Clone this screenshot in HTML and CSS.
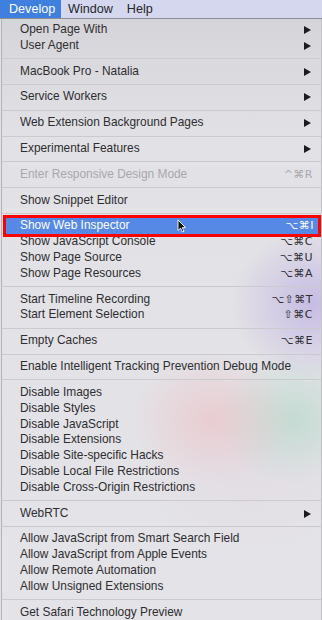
FILE: index.html
```html
<!DOCTYPE html>
<html lang="en">
<head>
    <meta charset="UTF-8">
    <meta name="viewport" content="width=device-width, initial-scale=1.0">
    <title>Develop menu</title>
    <link rel="stylesheet" href="styles.css">
</head>
<body>
    <div class="menubar">
        <div class="title active">Develop</div>
        <div class="title">Window</div>
        <div class="title">Help</div>
    </div>
    <div class="menu">
        <div class="item"><span>Open Page With</span><i class="arrow"></i></div>
        <div class="item"><span>User Agent</span><i class="arrow"></i></div>
        <div class="sep"></div>
        <div class="item"><span>MacBook Pro - Natalia</span><i class="arrow"></i></div>
        <div class="sep"></div>
        <div class="item"><span>Service Workers</span><i class="arrow"></i></div>
        <div class="sep"></div>
        <div class="item"><span>Web Extension Background Pages</span><i class="arrow"></i></div>
        <div class="sep"></div>
        <div class="item"><span>Experimental Features</span><i class="arrow"></i></div>
        <div class="sep"></div>
        <div class="item disabled"><span>Enter Responsive Design Mode</span><span class="key">^⌘R</span></div>
        <div class="sep"></div>
        <div class="item"><span>Show Snippet Editor</span></div>
        <div class="sep"></div>
        <div class="item selected">
            <span>Show Web Inspector</span><span class="key">⌥⌘I</span>
            <svg class="cursor" width="10" height="14" viewBox="0 0 10 14">
                <path d="M1 1 L1 11.5 L3.6 9.2 L5.4 13 L7 12.3 L5.3 8.6 L8.6 8.6 Z" fill="#111" stroke="#fff" stroke-width="0.9"/>
            </svg>
        </div>
        <div class="item"><span>Show JavaScript Console</span><span class="key">⌥⌘C</span></div>
        <div class="item"><span>Show Page Source</span><span class="key">⌥⌘U</span></div>
        <div class="item"><span>Show Page Resources</span><span class="key">⌥⌘A</span></div>
        <div class="sep"></div>
        <div class="item"><span>Start Timeline Recording</span><span class="key">⌥⇧⌘T</span></div>
        <div class="item"><span>Start Element Selection</span><span class="key">⇧⌘C</span></div>
        <div class="sep"></div>
        <div class="item"><span>Empty Caches</span><span class="key">⌥⌘E</span></div>
        <div class="sep"></div>
        <div class="item"><span>Enable Intelligent Tracking Prevention Debug Mode</span></div>
        <div class="sep"></div>
        <div class="item"><span>Disable Images</span></div>
        <div class="item"><span>Disable Styles</span></div>
        <div class="item"><span>Disable JavaScript</span></div>
        <div class="item"><span>Disable Extensions</span></div>
        <div class="item"><span>Disable Site-specific Hacks</span></div>
        <div class="item"><span>Disable Local File Restrictions</span></div>
        <div class="item"><span>Disable Cross-Origin Restrictions</span></div>
        <div class="sep"></div>
        <div class="item"><span>WebRTC</span><i class="arrow"></i></div>
        <div class="sep"></div>
        <div class="item"><span>Allow JavaScript from Smart Search Field</span></div>
        <div class="item"><span>Allow JavaScript from Apple Events</span></div>
        <div class="item"><span>Allow Remote Automation</span></div>
        <div class="item"><span>Allow Unsigned Extensions</span></div>
        <div class="sep"></div>
        <div class="item"><span>Get Safari Technology Preview</span></div>
    </div>
</body>
</html>
```

FILE: styles.css
```css
*{
    box-sizing: border-box;
}
body{
    margin: 0;
    width: 322px;
    height: 620px;
    overflow: hidden;
    background-color: #e2e1e5;
    font-family: "Liberation Sans", "DejaVu Sans", sans-serif;
    color: #2e2e31;
}
.menubar{
    height: 19px;
    display: flex;
    background-color: #d4d7ee;
    border-bottom: 1px solid #8e8e94;
    font-size: 12.6px;
    line-height: 18px;
}
.title{
    padding: 0 7px 0 7px;
    color: #262629;
}
.title.active{
    background-color: #3f7fe0;
    color: #fff;
    width: 61px;
    padding-left: 9px;
}
.menu{
    height: 601px;
    padding-top: 3px;
    margin-left: 1px;
    border-left: 1px solid #b4b3b8;
    border-right: 1px solid #c2c1c6;
    font-size: 11.9px;
    background:
        radial-gradient(ellipse 80px 75px at 310px 285px, rgba(170, 150, 225, 0.5), rgba(170, 150, 225, 0)),
        radial-gradient(ellipse 80px 65px at 210px 400px, rgba(238, 188, 192, 0.55), rgba(238, 188, 192, 0)),
        radial-gradient(ellipse 75px 65px at 290px 400px, rgba(170, 215, 195, 0.55), rgba(170, 215, 195, 0)),
        radial-gradient(ellipse 110px 80px at 250px 450px, rgba(226, 216, 226, 0.5), rgba(226, 216, 226, 0)),
        linear-gradient(#d5d4d8, #e2e1e5 120px, #e4e3e7);
}
.item{
    height: 15.85px;
    line-height: 15.85px;
    padding: 0 8px 0 18px;
    display: flex;
    justify-content: space-between;
    align-items: center;
    white-space: nowrap;
}
.item.disabled{
    color: #a9a8ad;
}
.item.selected{
    position: relative;
    margin: 0 3px 0 4px;
    padding: 0 4px 0 14px;
    background-color: #5689e5;
    color: #fff;
    box-shadow: 0 0 0 3px #ff0000;
}
.key{
    font-family: "DejaVu Sans", sans-serif;
    font-size: 11px;
    letter-spacing: 0.5px;
}
.arrow{
    width: 0;
    height: 0;
    margin-right: 2px;
    border-left: 7px solid #1c1c1e;
    border-top: 4px solid transparent;
    border-bottom: 4px solid transparent;
}
.sep{
    height: 9.95px;
    display: flex;
    align-items: center;
}
.sep::before{
    content: "";
    flex: 1;
    height: 1px;
    background-color: #cbcacf;
}
.cursor{
    position: absolute;
    left: 171px;
    top: 1px;
}
```
